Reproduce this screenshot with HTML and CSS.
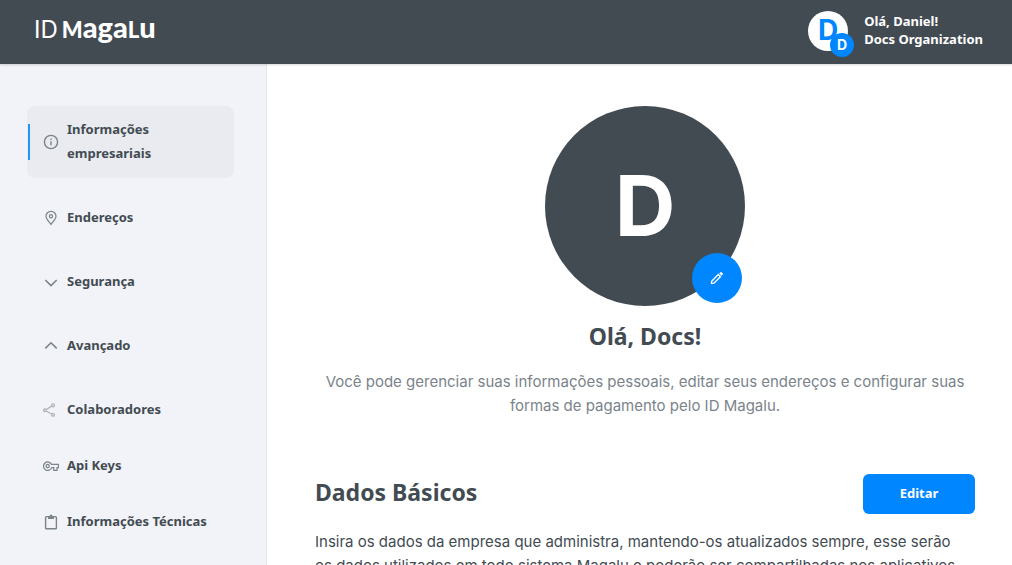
FILE: index.html
```html
<!DOCTYPE html>
<html lang="pt-BR">
<head>
<meta charset="utf-8">
<meta name="viewport" content="width=device-width, initial-scale=1">
<title>ID Magalu</title>
<link rel="stylesheet" href="styles.css">
</head>
<body>
<header class="topbar">
  <a class="logo" href="#"><span class="logo-id">ID</span><span class="logo-name"><span class="logo-cap">M</span>aga<span class="logo-cap">L</span>u</span></a>
  <div class="account">
    <div class="account-avatar">D<span class="account-badge">D</span></div>
    <div class="account-text"><span>Olá, Daniel!</span><span>Docs Organization</span></div>
  </div>
</header>
<div class="layout">
  <nav class="sidebar">
    <ul class="menu">
      <li><a class="item item-active" href="#">
        <svg class="icon" viewBox="0 0 16 16"><circle cx="8" cy="8" r="6.600"/><path d="M8 7.200v4M8 4.600v1.400"/></svg>
        <span>Informações empresariais</span></a></li>
      <li><a class="item" href="#">
        <svg class="icon icon-thin" viewBox="0 0 16 16"><path d="M8 14.400C5.500 11 3 8.900 3 6.300a5 5 0 0 1 10 0C13 8.900 10.500 11 8 14.400z"/><circle cx="8" cy="6.300" r="1.600"/></svg>
        <span>Endereços</span></a></li>
      <li><a class="item" href="#">
        <svg class="icon icon-bold" viewBox="0 0 16 16"><path d="M2.300 6 8 11.600 13.700 6"/></svg>
        <span>Segurança</span></a></li>
      <li><a class="item" href="#">
        <svg class="icon icon-bold" viewBox="0 0 16 16"><path d="M2.300 10.400 8 4.800l5.700 5.600"/></svg>
        <span>Avançado</span></a></li>
    </ul>
    <ul class="menu menu-sub">
      <li><a class="item" href="#">
        <svg class="icon icon-light" viewBox="0 0 16 16"><circle cx="1.900" cy="8.300" r="1.300"/><circle cx="10" cy="3.400" r="1.400"/><circle cx="10" cy="12.800" r="1.400"/><path d="m3.200 7.600 5.400-3.400M3.200 9l5.400 3"/></svg>
        <span>Colaboradores</span></a></li>
      <li><a class="item" href="#">
        <svg class="icon icon-thin" viewBox="0 0 16 16"><path d="M8.500 6.300h7v3.300H14v2.700h-3.200V9.600H8.700a4.200 4.200 0 1 1-.2-3.300z"/><circle cx="4.700" cy="8" r="1.600"/></svg>
        <span>Api Keys</span></a></li>
      <li><a class="item" href="#">
        <svg class="icon" viewBox="0 0 16 16"><rect x="2.600" y="2.600" width="10.800" height="12.200" rx=".8"/><path class="fill" d="M5 2h1.500a1.500 1.500 0 0 1 3 0H11v3H5z"/></svg>
        <span>Informações Técnicas</span></a></li>
    </ul>
  </nav>
  <main class="content">
    <section class="profile">
      <div class="avatar">D
        <button class="avatar-edit" type="button" aria-label="Editar foto">
          <svg class="pencil" viewBox="0 0 14 14"><path d="M1.600 12.400v-2.100L8.300 3.600l2.100 2.100-6.700 6.700z"/><path class="pencil-tip" d="m9.200 2.500 1.300-1.300q.5-.5 1 0l1.300 1.300q.5.500 0 1l-1.300 1.300z"/></svg>
        </button>
      </div>
      <h1 class="title">Olá, Docs!</h1>
      <p class="intro">Você pode gerenciar suas informações pessoais, editar seus endereços e configurar suas formas de pagamento pelo ID Magalu.</p>
    </section>
    <section class="basics">
      <div class="basics-head">
        <h2 class="title">Dados Básicos</h2>
        <button class="button" type="button">Editar</button>
      </div>
      <p class="text">Insira os dados da empresa que administra, mantendo-os atualizados sempre, esse serão<br>os dados utilizados em todo sistema Magalu e poderão ser compartilhadas nos aplicativos</p>
    </section>
  </main>
</div>
</body>
</html>
```
FILE: styles.css
```css
* { box-sizing: border-box; }
body {
  margin: 0;
  height: 100vh;
  display: flex;
  flex-direction: column;
  overflow: hidden;
  font-family: Inter, "Noto Sans", sans-serif;
  font-size: 15px;
  line-height: 24px;
  color: #434b52;
  background: #fff;
}
h1, h2, p, ul { margin: 0; padding: 0; }
button { font: inherit; border: 0; cursor: pointer; }

.topbar {
  flex: none;
  display: flex;
  align-items: center;
  justify-content: space-between;
  height: 64px;
  padding: 0 29px 0 34px;
  background: #434b52;
  color: #fff;
  box-shadow: 0 1px 2px rgba(0, 0, 0, .16);
  z-index: 1;
}
.logo {
  display: flex;
  align-items: baseline;
  gap: 4px;
  padding-bottom: 8px;
  color: #fff;
  text-decoration: none;
  font-size: 24px;
}
.logo-name { font-family: Lato, sans-serif; font-size: 29px; font-weight: 900; }
.logo-cap { font-size: 22px; }
.account { display: flex; align-items: center; gap: 16px; padding-bottom: 2px; }
.account-avatar {
  position: relative;
  width: 40px;
  height: 40px;
  border-radius: 50%;
  background: #fff;
  color: #0086ff;
  font-size: 28px;
  font-weight: 700;
  line-height: 38px;
  text-align: center;
}
.account-badge {
  position: absolute;
  right: -6px;
  bottom: -6px;
  width: 24px;
  height: 24px;
  border-radius: 50%;
  background: #0086ff;
  color: #fff;
  font-size: 14px;
  line-height: 24px;
}
.account-text {
  display: flex;
  flex-direction: column;
  padding-bottom: 2px;
  font-family: "Noto Sans", sans-serif;
  font-size: 13px;
  font-weight: 700;
  line-height: 18px;
}

.layout { flex: 1; display: flex; min-height: 0; }
.sidebar {
  flex: none;
  width: 267px;
  padding: 42px 32px 0 27px;
  background: #f1f3f8;
  border-right: 1px solid #e6e7ea;
}
.menu { list-style: none; display: flex; flex-direction: column; gap: 16px; }
.menu-sub { gap: 8px; margin-top: 16px; }
.item {
  position: relative;
  display: flex;
  align-items: center;
  gap: 8px;
  padding: 11px 16px 13px;
  border-radius: 8px;
  color: #434b52;
  text-decoration: none;
  font-family: "Noto Sans", sans-serif;
  font-size: 13px;
  font-weight: 700;
}
.item-active { background: #e9ebf0; padding-right: 64px; }
.item-active::before {
  content: "";
  position: absolute;
  left: 1px;
  top: 18px;
  bottom: 18px;
  width: 2px;
  background: #2196f3;
}
.icon {
  flex: none;
  width: 16px;
  height: 16px;
  margin-top: 2px;
  fill: none;
  stroke: #7b838b;
  stroke-width: 1.4;
}
.icon-thin { stroke-width: 1.2; }
.icon-bold { stroke-width: 1.6; }
.icon-light { stroke: #b4b6ba; stroke-width: 1.4; }
.fill { fill: #7b838b; stroke: none; }

.content { flex: 1; min-width: 0; padding: 42px 37px 0 48px; }
.profile { display: flex; flex-direction: column; align-items: center; }
.avatar {
  position: relative;
  width: 200px;
  height: 200px;
  border-radius: 50%;
  background: #434b52;
  color: #fff;
  font-size: 84px;
  font-weight: 700;
  line-height: 200px;
  text-align: center;
}
.avatar-edit {
  position: absolute;
  right: 3px;
  bottom: 3px;
  display: flex;
  align-items: center;
  justify-content: center;
  width: 50px;
  height: 50px;
  padding: 0;
  border-radius: 50%;
  background: #0086ff;
}
.pencil { width: 14px; height: 14px; fill: none; stroke: #fff; stroke-width: 1.4; }
.pencil-tip { fill: #fff; stroke: none; }
.title {
  padding-bottom: 4px;
  font-family: "Noto Sans", sans-serif;
  font-size: 23px;
  font-weight: 700;
  line-height: 28px;
}
.profile .title { margin-top: 16px; }
.intro { margin-top: 16px; text-align: center; color: #7b838b; }
.basics { margin-top: 56px; }
.basics-head { display: flex; align-items: center; justify-content: space-between; }
.button {
  width: 112px;
  height: 40px;
  padding: 0 0 2px;
  border-radius: 6px;
  background: #0086ff;
  color: #fff;
  font-family: "Noto Sans", sans-serif;
  font-size: 13px;
  font-weight: 700;
}
.text { margin-top: 16px; }
```
